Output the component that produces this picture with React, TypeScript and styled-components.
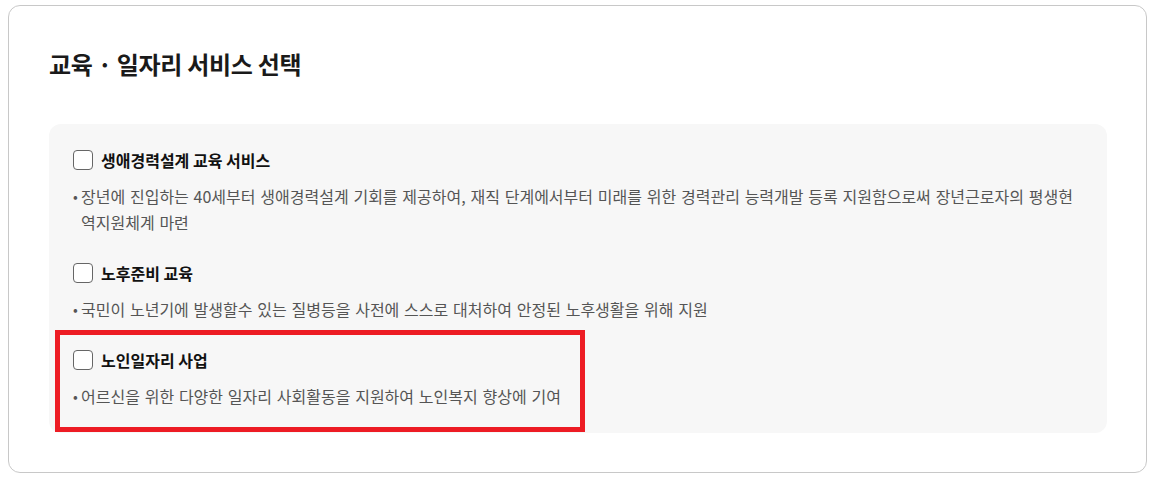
import styled, { createGlobalStyle } from 'styled-components'

const services = [
  {
    id: 'career',
    title: '생애경력설계 교육 서비스',
    desc: '장년에 진입하는 40세부터 생애경력설계 기회를 제공하여, 재직 단계에서부터 미래를 위한 경력관리 능력개발 등록 지원함으로써 장년근로자의 평생현역지원체계 마련',
    highlighted: false,
  },
  {
    id: 'retire',
    title: '노후준비 교육',
    desc: '국민이 노년기에 발생할수 있는 질병등을 사전에 스스로 대처하여 안정된 노후생활을 위해 지원',
    highlighted: false,
  },
  {
    id: 'senior-job',
    title: '노인일자리 사업',
    desc: '어르신을 위한 다양한 일자리 사회활동을 지원하여 노인복지 향상에 기여',
    highlighted: true,
  },
]

export default function App() {
  return (
    <>
      <GlobalStyle />
      <Card>
        <Title>교육 · 일자리 서비스 선택</Title>
        <OptionBox>
          {services.map((item) => (
            <Option key={item.id}>
              {item.highlighted && <Highlight />}
              <Label>
                <Check type='checkbox' />
                <LabelText>{item.title}</LabelText>
              </Label>
              <Desc>
                <Bullet>•</Bullet>
                <DescText>{item.desc}</DescText>
              </Desc>
            </Option>
          ))}
        </OptionBox>
      </Card>
    </>
  )
}

const GlobalStyle = createGlobalStyle`
  body {
    margin: 5px 8px;
    background: #fff;
    font-family: 'Noto Sans CJK KR', 'Noto Sans', sans-serif;
  }
`

const Card = styled.section`
  border: 1px solid #c8c8c8;
  border-radius: 12px;
  padding: 42px 39px 40px 40px;
  height: 468px;
  box-sizing: border-box;
`

const Title = styled.h2`
  margin: 0 0 44px;
  font-size: 24px;
  line-height: 32px;
  font-weight: 700;
  letter-spacing: -0.3px;
  color: #1a1a1a;
`

const OptionBox = styled.div`
  background: #f7f7f7;
  border-radius: 12px;
  padding: 24px;
  display: flex;
  flex-direction: column;
  gap: 26px;
`

const Option = styled.div`
  position: relative;
  display: flex;
  flex-direction: column;
  gap: 11px;
`

const Highlight = styled.div`
  position: absolute;
  left: -18px;
  top: -18px;
  width: 530px;
  height: 102px;
  box-sizing: border-box;
  border: 5px solid #ed1c24;
  pointer-events: none;
`

const Label = styled.label`
  display: flex;
  align-items: center;
  gap: 8px;
  height: 24px;
  cursor: pointer;
`

const Check = styled.input`
  appearance: none;
  margin: 0;
  width: 20px;
  height: 20px;
  border: 1.5px solid #666;
  border-radius: 4px;
  background: #fff;
  box-sizing: border-box;
`

const LabelText = styled.span`
  font-size: 16px;
  font-weight: 700;
  line-height: 24px;
  color: #111;
`

const Desc = styled.p`
  margin: 0;
  display: flex;
  font-size: 16px;
  line-height: 26px;
  word-spacing: 1.2px;
  color: #555;
`

const Bullet = styled.span`
  flex: 0 0 8px;
  font-size: 14px;
  color: #555;
`

const DescText = styled.span`
  flex: 1;
`
